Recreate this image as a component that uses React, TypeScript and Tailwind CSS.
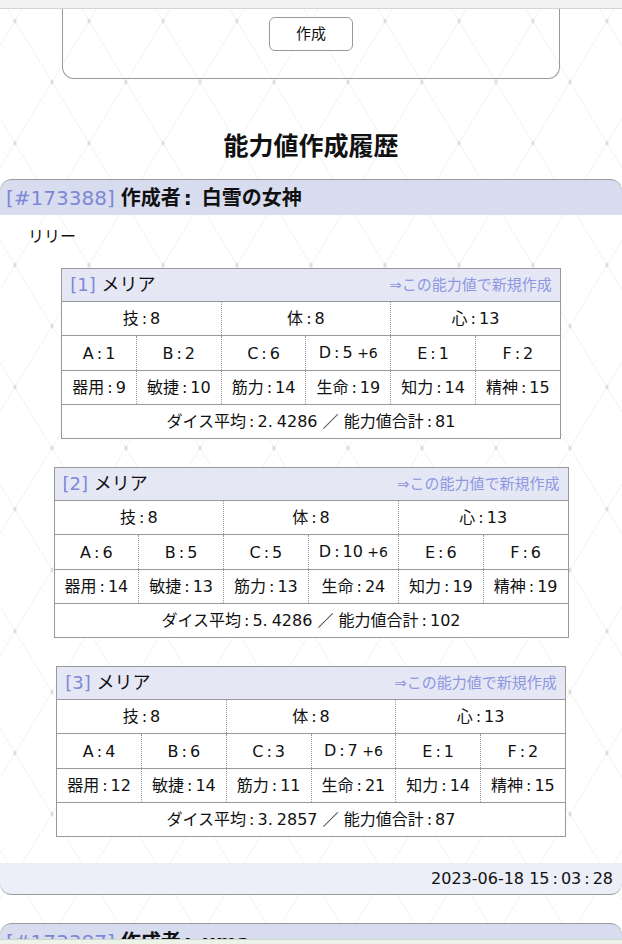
import React from 'react';

type Rec = {
  no: number;
  name: string;
  gi: number;
  tai: number;
  shin: number;
  dice: [string, string, string?][];
  stats: [string, number][];
  avg: string;
  total: number;
};

const records: Rec[] = [
  {
    no: 1,
    name: 'メリア',
    gi: 8,
    tai: 8,
    shin: 13,
    dice: [['A', '1'], ['B', '2'], ['C', '6'], ['D', '5', '+6'], ['E', '1'], ['F', '2']],
    stats: [['器用', 9], ['敏捷', 10], ['筋力', 14], ['生命', 19], ['知力', 14], ['精神', 15]],
    avg: '2.4286',
    total: 81,
  },
  {
    no: 2,
    name: 'メリア',
    gi: 8,
    tai: 8,
    shin: 13,
    dice: [['A', '6'], ['B', '5'], ['C', '5'], ['D', '10', '+6'], ['E', '6'], ['F', '6']],
    stats: [['器用', 14], ['敏捷', 13], ['筋力', 13], ['生命', 24], ['知力', 19], ['精神', 19]],
    avg: '5.4286',
    total: 102,
  },
  {
    no: 3,
    name: 'メリア',
    gi: 8,
    tai: 8,
    shin: 13,
    dice: [['A', '4'], ['B', '6'], ['C', '3'], ['D', '7', '+6'], ['E', '1'], ['F', '2']],
    stats: [['器用', 12], ['敏捷', 14], ['筋力', 11], ['生命', 21], ['知力', 14], ['精神', 15]],
    avg: '3.2857',
    total: 87,
  },
];

const font = "font-['DejaVu_Sans','Noto_Sans_CJK_JP',sans-serif]";

// 元のフォントはコロンの幅が広いので少し余白をつける
const C = () => <span className="mx-[3px]">:</span>;

// 背景の菱形パターン
const Background = () => (
  <svg className="absolute inset-0 w-full h-full" aria-hidden>
    <defs>
      <pattern id="dia" width="74" height="122" patternUnits="userSpaceOnUse" patternTransform="translate(15 21)">
        <path d="M0 0L37 61L0 122M74 0L37 61L74 122" stroke="#f2f2f2" strokeWidth="1" fill="none" />
        <ellipse cx="0" cy="0" rx="1.6" ry="2.6" fill="#dedede" />
        <ellipse cx="74" cy="0" rx="1.6" ry="2.6" fill="#dedede" />
        <ellipse cx="37" cy="61" rx="1.6" ry="2.6" fill="#dedede" />
        <ellipse cx="0" cy="122" rx="1.6" ry="2.6" fill="#dedede" />
        <ellipse cx="74" cy="122" rx="1.6" ry="2.6" fill="#dedede" />
      </pattern>
    </defs>
    <rect width="100%" height="100%" fill="url(#dia)" />
  </svg>
);

const Avg = ({ v }: { v: string }) => {
  const [a, b] = v.split('.');
  return (
    <>
      {a}.<span className="ml-[4px]">{b}</span>
    </>
  );
};

const StatTable = ({ r }: { r: Rec }) => {
  const cell = 'border-r border-dotted border-[#999] last:border-r-0 px-[10px] py-[5px] text-center whitespace-nowrap font-normal';
  return (
    <table className="w-[80%] mx-auto border border-[#999] border-collapse bg-white text-[16px] leading-[23px] text-[#111]">
      <tbody>
        <tr className="border-b border-[#999]">
          <th colSpan={6} className="bg-[#e5e7f5] px-[8px] py-[4px] font-normal leading-6">
            <div className="flex items-center justify-between">
              <span className="text-[18px]">
                <span className="text-[#7e88d8]">[{r.no}]</span> {r.name}
              </span>
              <span className="text-[15px] text-[#8e97e0]">⇒この能力値で新規作成</span>
            </div>
          </th>
        </tr>
        <tr className="border-b border-[#999]">
          <td colSpan={2} className={cell}>技<C />{r.gi}</td>
          <td colSpan={2} className={cell}>体<C />{r.tai}</td>
          <td colSpan={2} className={cell}>心<C />{r.shin}</td>
        </tr>
        <tr className="border-b border-[#999]">
          {r.dice.map(([k, v, b]) => (
            <td key={k} className={cell}>
              {k}<C />{v}
              {b && <span className="text-[14px]"> {b}</span>}
            </td>
          ))}
        </tr>
        <tr className="border-b border-[#999]">
          {r.stats.map(([k, v]) => (
            <td key={k} className={cell}>
              {k}<C />{v}
            </td>
          ))}
        </tr>
        <tr>
          <td colSpan={6} className="px-[4px] py-[5px] text-center">
            ダイス平均<C /><Avg v={r.avg} /> ／ 能力値合計<C />{r.total}
          </td>
        </tr>
      </tbody>
    </table>
  );
};

const RecordHead = ({ id, author }: { id: number; author: string }) => (
  <div className="h-[36px] bg-[#d8dcef] border-t border-[#999] rounded-t-[12px] px-[6px] flex items-center text-[20px]">
    <span className="text-[#7d88d6]">[#{id}]</span>
    <span className="ml-[6px] font-bold">作成者<C /> {author}</span>
  </div>
);

const App: React.FC = () => {
  return (
    <div className={`relative min-h-screen bg-white overflow-hidden ${font} text-[#111]`}>
      <Background />
      <div className="relative">
        {/* 上部の固定ヘッダーの下端 */}
        <div className="h-[9px] bg-[#f2f2f2] border-b border-[#d4d4d4]" />

        {/* 作成フォームの下部 */}
        <div className="mx-[62px] h-[70px] border-x border-b border-[#999] rounded-b-[12px] flex justify-center pt-[8px]">
          <button className="w-[84px] h-[34px] border border-[#999] rounded-[6px] bg-white text-[15px]">作成</button>
        </div>

        <h2 className="mt-[52px] text-center text-[25px] font-bold leading-8">能力値作成履歴</h2>

        {/* 履歴 */}
        <div className="mt-[16px]">
          <RecordHead id={173388} author="白雪の女神" />
          <div className="pl-[28px] pt-[10px] text-[16px] leading-6">リリー</div>
          <div className="mt-[19px] flex flex-col gap-[28px]">
            {records.map((r) => (
              <StatTable key={r.no} r={r} />
            ))}
          </div>
          <div className="mt-[26px] h-[32px] bg-[#eceef8] border-b border-[#999] rounded-b-[12px] px-[9px] flex items-center justify-end text-[16px]">
            2023-06-18 15<C />03<C />28
          </div>
        </div>

        <div className="mt-[28px]">
          <RecordHead id={173387} author="uma" />
          <div className="h-[200px]" />
        </div>
      </div>
      <div className="fixed bottom-0 left-0 right-0 h-[5px] bg-[#eef3ea] border-t border-[#cfd6cc]" />
    </div>
  );
};

export default App;
